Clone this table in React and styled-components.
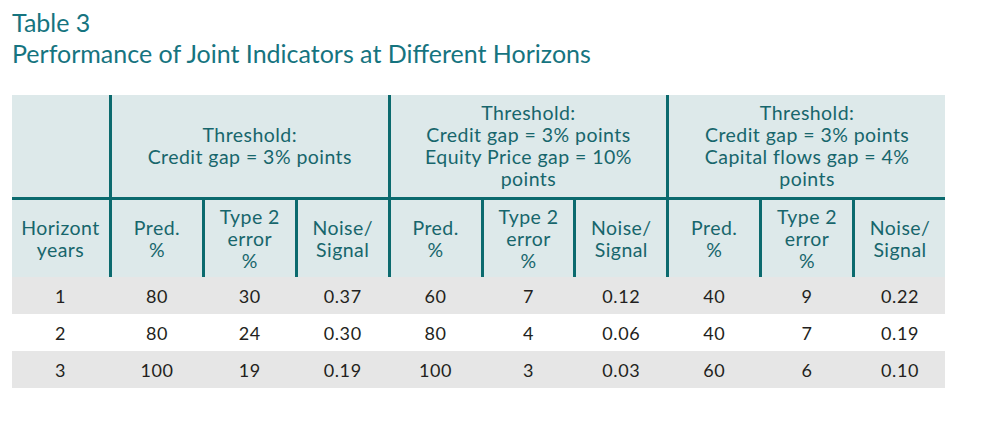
import React from "react";
import styled, { createGlobalStyle } from "styled-components";

const GlobalStyle = createGlobalStyle`
  html, body {
    margin: 0;
    padding: 0;
    background: #ffffff;
  }
  body {
    font-family: Lato, "Noto Sans", sans-serif;
  }
`;

const Page = styled.div`
  width: 986px;
  height: 429px;
  padding: 7px 0 0 12px;
  box-sizing: border-box;
`;

const Caption = styled.div`
  color: #16747f;
  font-size: 25px;
  line-height: 31px;
  margin-bottom: 26px;
`;

const Table = styled.table`
  width: 933px;
  border-collapse: separate;
  border-spacing: 0;
  table-layout: fixed;
`;

const HeadCell = styled.th`
  background: #dde9ea;
  color: #17666c;
  font-weight: normal;
  font-size: 19.5px;
  letter-spacing: 0.45px;
  line-height: 22px;
  text-align: center;
  vertical-align: middle;
  padding: 0 2px;
  box-sizing: border-box;
  border-left: ${(p) => (p.$line ? "3px solid #0b6a6e" : "none")};
  border-bottom: ${(p) => (p.$under ? "3px solid #0b6a6e" : "none")};
  height: ${(p) => p.$h}px;
`;

const Row = styled.tr`
  background: ${(p) => (p.$shade ? "#e6e6e6" : "#ffffff")};
`;

const Cell = styled.td`
  color: #231f20;
  font-size: 18px;
  letter-spacing: 0.6px;
  height: 37px;
  padding: 0;
  text-align: center;
  vertical-align: middle;
  border-left: ${(p) => (p.$first ? "none" : "3px solid transparent")};
`;

const groups = [
  ["Threshold:", "Credit gap = 3% points"],
  ["Threshold:", "Credit gap = 3% points", "Equity Price gap = 10%", "points"],
  ["Threshold:", "Credit gap = 3% points", "Capital flows gap = 4%", "points"],
];

const subHeads = [
  ["Pred.", "%"],
  ["Type 2", "error", "%"],
  ["Noise/", "Signal"],
];

const rows = [
  ["1", "80", "30", "0.37", "60", "7", "0.12", "40", "9", "0.22"],
  ["2", "80", "24", "0.30", "80", "4", "0.06", "40", "7", "0.19"],
  ["3", "100", "19", "0.19", "100", "3", "0.03", "60", "6", "0.10"],
];

const Lines = ({ items }) =>
  items.map((t, i) => (
    <React.Fragment key={i}>
      {i > 0 && <br />}
      {t}
    </React.Fragment>
  ));

export default function App() {
  return (
    <Page>
      <GlobalStyle />
      <Caption>
        Table 3
        <br />
        Performance of Joint Indicators at Different Horizons
      </Caption>
      <Table>
        <colgroup>
          <col style={{ width: 97 }} />
          {Array.from({ length: 9 }).map((_, i) => (
            <col key={i} />
          ))}
        </colgroup>
        <thead>
          <tr>
            <HeadCell $under $h={105} />
            {groups.map((g, i) => (
              <HeadCell key={i} colSpan={3} $line $under $h={105}>
                <Lines items={g} />
              </HeadCell>
            ))}
          </tr>
          <tr>
            <HeadCell $h={77}>
              Horizont
              <br />
              years
            </HeadCell>
            {groups.map((_, g) =>
              subHeads.map((s, i) => (
                <HeadCell key={`${g}-${i}`} $line $h={77}>
                  <Lines items={s} />
                </HeadCell>
              ))
            )}
          </tr>
        </thead>
        <tbody>
          {rows.map((r, i) => (
            <Row key={i} $shade={i !== 1}>
              {r.map((v, j) => (
                <Cell key={j} $first={j === 0}>
                  {v}
                </Cell>
              ))}
            </Row>
          ))}
        </tbody>
      </Table>
    </Page>
  );
}
